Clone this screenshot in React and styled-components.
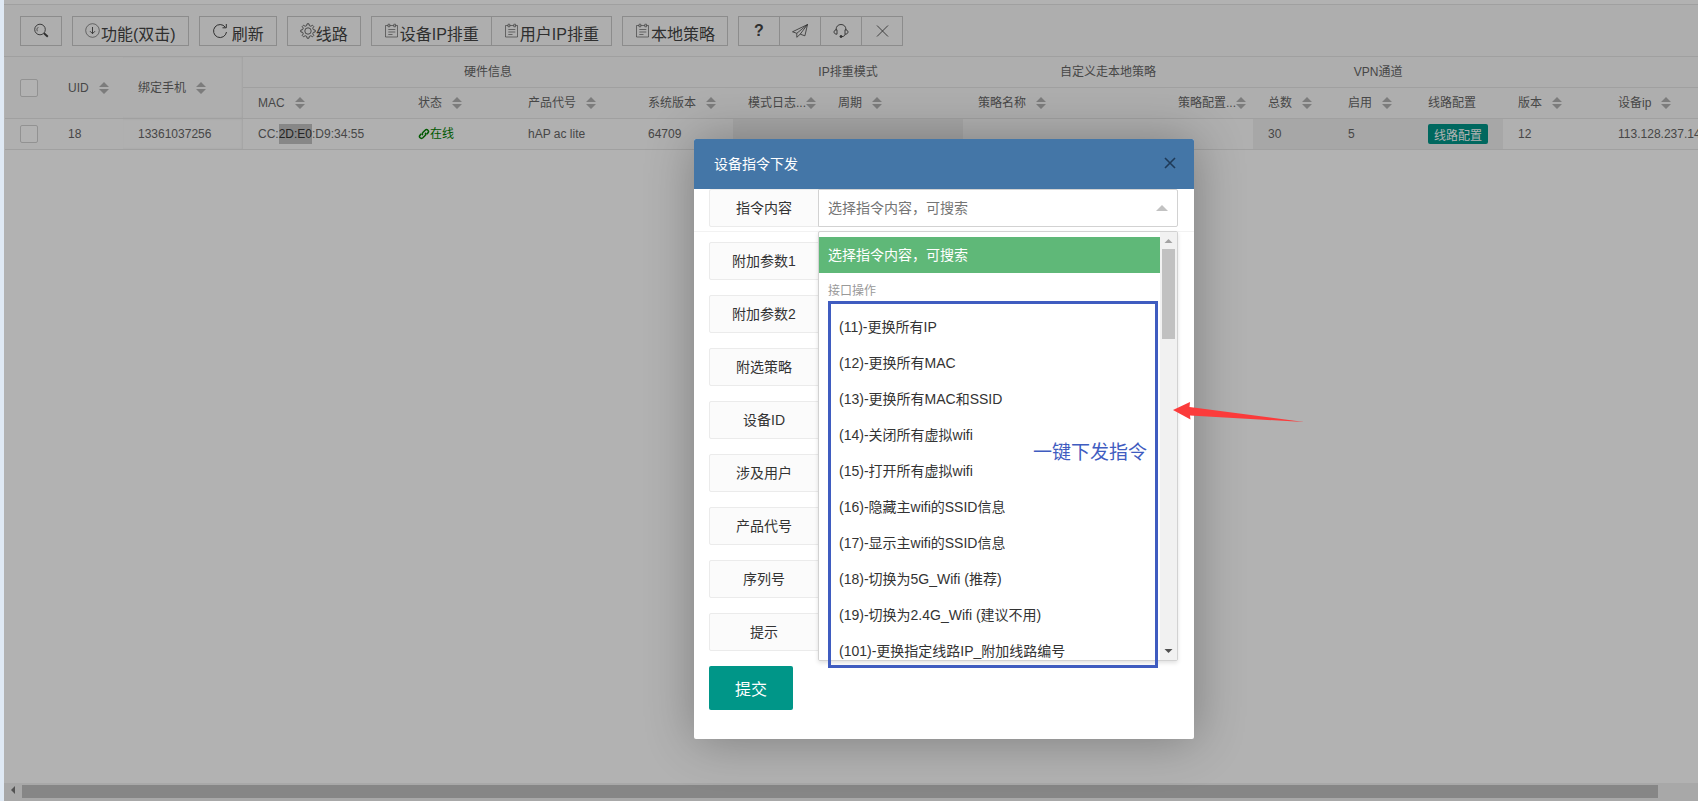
import React, { useState } from 'react';
import styled, { createGlobalStyle } from 'styled-components';

const groups = [
  { title: "硬件信息", span: 4 },
  { title: "IP排重模式", span: 2 },
  { title: "自定义走本地策略", span: 2 },
  { title: "VPN通道", span: 3 },
  { title: "", span: 2 },
];

const columns = [
  { title: "MAC", sort: true },
  { title: "状态", sort: true },
  { title: "产品代号", sort: true },
  { title: "系统版本", sort: true },
  { title: "模式日志...", sort: true, tight: true },
  { title: "周期", sort: true },
  { title: "策略名称", sort: true },
  { title: "策略配置...", sort: true, tight: true },
  { title: "总数", sort: true },
  { title: "启用", sort: true },
  { title: "线路配置" },
  { title: "版本", sort: true },
  { title: "设备ip", sort: true },
];

const widths = [48, 70, 120, 160, 110, 120, 100, 90, 140, 200, 90, 80, 80, 90, 100, 160];

const commands = [
  "(11)-更换所有IP",
  "(12)-更换所有MAC",
  "(13)-更换所有MAC和SSID",
  "(14)-关闭所有虚拟wifi",
  "(15)-打开所有虚拟wifi",
  "(16)-隐藏主wifi的SSID信息",
  "(17)-显示主wifi的SSID信息",
  "(18)-切换为5G_Wifi (推荐)",
  "(19)-切换为2.4G_Wifi (建议不用)",
  "(101)-更换指定线路IP_附加线路编号",
];

const fields = ["附加参数1", "附加参数2", "附选策略", "设备ID", "涉及用户", "产品代号", "序列号", "提示"];

///ICONS///
const Icon = ({ children, size = 16 }) => (
  <svg width={size} height={size} viewBox="0 0 16 16" fill="none" stroke="currentColor" strokeWidth="1" aria-hidden="true">
    {children}
  </svg>
);

const SearchIcon = () => (
  <Icon>
    <circle cx="7" cy="6.5" r="5.3" strokeWidth=".9" />
    <path d="M11 10.200l3.800 3.600" strokeWidth="1.900" />
    <path d="M4.300 8.300a3.200 3.200 0 0 1 1-4.200" strokeWidth=".7" />
  </Icon>
);

const DownIcon = () => (
  <Icon>
    <circle cx="7.5" cy="7.5" r="6.8" strokeWidth=".6" />
    <path d="M7.500 4v6.500M5 8.200l2.500 2.500L10 8.200" strokeWidth=".9" />
  </Icon>
);

const RefreshIcon = () => (
  <Icon>
    <path d="M13.300 4.200A6.500 6.500 0 1 0 14.500 9" />
    <path d="M14.300 1v3.800h-3.800" />
  </Icon>
);

const GearIcon = () => (
  <Icon>
    <circle cx="8" cy="8" r="3.200" strokeWidth=".8" />
    <path d="M6.7 2.6L7 .8h2l.3 1.8 1.6.7 1.5-1.1 1.4 1.4-1.1 1.5.7 1.6 1.8.3v2l-1.8.3-.7 1.6 1.1 1.5-1.4 1.4-1.5-1.1-1.6.7-.3 1.8H7l-.3-1.8-1.6-.7-1.5 1.1-1.4-1.4 1.1-1.5-.7-1.6L.8 9V7l1.8-.3.7-1.6-1.1-1.5 1.4-1.4 1.5 1.1z" strokeWidth=".8" />
  </Icon>
);

const NoteIcon = () => (
  <Icon>
    <path d="M4 2.500H1.500v11.500h12V2.500h-2M5.800 2.500h4M4 1.200h1.800v2.600H4zM9.800 1.200h1.800v2.600H9.800zM4.300 6.500h7M4.300 9h7M4.300 11.500h4.200" strokeWidth=".6" />
  </Icon>
);

const PlaneIcon = () => (
  <Icon>
    <path d="M15.500 1.500L.5 8.800l4.300 1.500L15.500 1.500l-2.600 11.300-4.700-1.600M4.800 10.300v4l3.400-3.100L15.500 1.500" strokeWidth=".8" />
  </Icon>
);

const ServiceIcon = () => (
  <Icon>
    <path d="M3 7C3 3.500 5 1.500 8 1.500s5 2 5 5.500" strokeWidth=".9" />
    <path d="M4 6.800v4.400C2.300 11.200 1 10.500 1 9s1.300-2.200 3-2.200zM12 6.800v4.400c1.700 0 3-.7 3-2.200s-1.300-2.200-3-2.200zM12 11.200c0 1.500-1.200 2.300-3 2.400" strokeWidth=".9" />
    <circle cx="8" cy="13.500" r="1" fill="currentColor" />
  </Icon>
);

const CrossIcon = ({ bold }) => (
  <Icon>
    <path d={bold ? "M3 3l10 10M13 3L3 13" : "M3 2.500l11 11M14 2.500L3 13.500"} strokeWidth={bold ? 1.6 : 0.9} />
  </Icon>
);

const LinkIcon = () => (
  <Icon size={12}>
    <g strokeWidth="2">
      <path d="M6.500 9.500c-1-1-.9-2.500 0-3.400l3-3.200c1-1 2.700-1 3.700 0s1 2.600 0 3.600l-1.700 1.800" />
      <path d="M9.500 6.500c1 1 .9 2.500 0 3.400l-3 3.200c-1 1-2.700 1-3.700 0s-1-2.600 0-3.600l1.700-1.800" />
    </g>
  </Icon>
);

const SortIcon = () => (
  <svg width="10" height="12" viewBox="0 0 10 12" fill="#b2b2b2" aria-hidden="true">
    <path d="M0 5l5-5 5 5zM0 7h10l-5 5z" />
  </svg>
);

const HeadCell = ({ col }) => (
  <HeadContent $tight={col.tight}>
    {col.title}
    {col.sort && <SortIcon />}
  </HeadContent>
);

const App = () => {
  ////STATES////
  const [checked, setChecked] = useState(false);
  const [command, setCommand] = useState("");

  return (
    <Page>
      <GlobalStyle />
      <Toolbar>
        <ToolButton aria-label="搜索"><SearchIcon /></ToolButton>
        <ToolButton><DownIcon /><span>功能(双击)</span></ToolButton>
        <ToolButton $gap="4px"><RefreshIcon /><span>刷新</span></ToolButton>
        <ToolButton><GearIcon /><span>线路</span></ToolButton>
        <ButtonGroup>
          <ToolButton><NoteIcon /><span>设备IP排重</span></ToolButton>
          <ToolButton><NoteIcon /><span>用户IP排重</span></ToolButton>
        </ButtonGroup>
        <ToolButton><NoteIcon /><span>本地策略</span></ToolButton>
        <ButtonGroup>
          <ToolButton><Question>?</Question></ToolButton>
          <ToolButton aria-label="发送"><PlaneIcon /></ToolButton>
          <ToolButton aria-label="客服"><ServiceIcon /></ToolButton>
          <ToolButton aria-label="关闭"><CrossIcon /></ToolButton>
        </ButtonGroup>
      </Toolbar>

      <TableBox>
        <Table>
          <colgroup>
            {widths.map((w, index) => <Col key={index} $w={w} />)}
          </colgroup>
          <thead>
            <tr>
              <Th rowSpan={2}><Checkbox aria-label="全选" checked={checked} onChange={() => setChecked(!checked)} /></Th>
              <Th rowSpan={2}><HeadCell col={{ title: "UID", sort: true }} /></Th>
              <Th rowSpan={2} $edge><HeadCell col={{ title: "绑定手机", sort: true }} /></Th>
              {groups.map((group, index) => (
                <Th key={index} colSpan={group.span} $center>{group.title}</Th>
              ))}
            </tr>
            <tr>
              {columns.map((col) => <Th key={col.title}><HeadCell col={col} /></Th>)}
            </tr>
          </thead>
          <tbody>
            <tr>
              <Td><Checkbox aria-label="选择 18" checked={checked} onChange={() => setChecked(!checked)} /></Td>
              <Td>18</Td>
              <Td $edge>13361037256</Td>
              <Td>CC:<Marked>2D:E0</Marked>:D9:34:55</Td>
              <Td><Online><LinkIcon />在线</Online></Td>
              <Td>hAP ac lite</Td>
              <Td>64709</Td>
              <Td $shade />
              <Td $shade />
              <Td />
              <Td />
              <Td $shade>30</Td>
              <Td $shade>5</Td>
              <Td $shade><RowButton>线路配置</RowButton></Td>
              <Td>12</Td>
              <Td>113.128.237.14</Td>
            </tr>
          </tbody>
        </Table>
      </TableBox>

      <BottomScroll>
        <svg width="18" height="18" viewBox="0 0 18 18" fill="#777" aria-hidden="true"><path d="M11 4v8L7 8z" /></svg>
        <BottomThumb />
      </BottomScroll>

      <Shade />

      <Modal role="dialog" aria-labelledby="dialog-title">
        <ModalHeader>
          <ModalTitle id="dialog-title">设备指令下发</ModalTitle>
          <CloseButton aria-label="关闭"><CrossIcon bold /></CloseButton>
        </ModalHeader>
        <Form onSubmit={(e) => e.preventDefault()}>
          <CommandItem>
            <Label htmlFor="command">指令内容</Label>
            <SelectBox>
              <Input id="command" placeholder="选择指令内容，可搜索" value={command} onChange={(e) => setCommand(e.target.value)} />
              <Caret width="12" height="6" viewBox="0 0 12 6" aria-hidden="true"><path d="M0 6l6-6 6 6z" fill="#c2c2c2" /></Caret>
              <Dropdown>
                <Options role="listbox" aria-label="指令内容">
                  <Option role="option" aria-selected="true" $active>选择指令内容，可搜索</Option>
                  <OptionGroup role="presentation">接口操作</OptionGroup>
                  {commands.map((item) => (
                    <Option key={item} role="option" aria-selected="false" $child onClick={() => setCommand(item)}>{item}</Option>
                  ))}
                </Options>
                <ScrollTrack>
                  <svg width="17" height="17" viewBox="0 0 17 17" fill="#a3a3a3" aria-hidden="true"><path d="M4.500 11h8l-4-4z" /></svg>
                  <ScrollThumb />
                  <svg width="17" height="17" viewBox="0 0 17 17" fill="#505050" aria-hidden="true"><path d="M4.500 6h8l-4 4z" /></svg>
                </ScrollTrack>
              </Dropdown>
              <Frame><Note>一键下发指令</Note></Frame>
              <Arrow width="132" height="22" viewBox="0 0 132 22" aria-hidden="true">
                <path d="M0 9L17 1l-.5 5L131 21 17 14.500l.5 4z" fill="#fb3b3b" />
              </Arrow>
            </SelectBox>
          </CommandItem>
          {fields.map((field, index) => (
            <FormItem key={field}>
              <Label htmlFor={`field-${index}`}>{field}</Label>
              <Input id={`field-${index}`} />
            </FormItem>
          ))}
          <Submit type="submit">提交</Submit>
        </Form>
      </Modal>
    </Page>
  );
};

///STYLED COMPONENTS///
const GlobalStyle = createGlobalStyle`
  * {
    box-sizing: border-box;
  }

  body {
    margin: 0;
    overflow: hidden;
  }

  body, button, input {
    font-family: "Liberation Sans", "Noto Sans CJK SC", sans-serif;
  }
`;

const Page = styled.div`
  position: relative;
  display: flex;
  flex-direction: column;
  min-height: 100vh;
  padding-top: 4px;
  border-left: 4px solid #dfe9f4;
  background: #fff;
  color: #666;
  overflow: hidden;
`;

const Toolbar = styled.div`
  display: flex;
  gap: 10px;
  padding: 11px 16px 10px;
  border-top: 1px solid #e6e6e6;
  border-bottom: 1px solid #e6e6e6;
  background: #fafafa;
`;

const ToolButton = styled.button`
  display: flex;
  align-items: center;
  gap: ${({ $gap }) => $gap || 0};
  height: 30px;
  padding: 0 12px;
  border: 1px solid #c9c9c9;
  background: transparent;
  color: #444;
  font-size: 16px;
  line-height: 24px;
  white-space: nowrap;
  cursor: pointer;

  svg {
    flex-shrink: 0;
  }

  span {
    padding-top: 7px;
  }
`;

const ButtonGroup = styled.div`
  display: flex;

  ${ToolButton} + ${ToolButton} {
    margin-left: -1px;
  }
`;

const Question = styled.b`
  width: 16px;
  text-align: center;
`;

const TableBox = styled.div`
  flex: 1;
  overflow: hidden;
`;

const Table = styled.table`
  table-layout: fixed;
  width: 1758px;
  margin-left: 1px;
  border-spacing: 0;
  font-size: 12px;
  line-height: 20px;
`;

const Col = styled.col`
  width: ${({ $w }) => $w}px;
`;

const Th = styled.th`
  height: 31px;
  padding: 0 15px;
  border-bottom: 1px solid #e6e6e6;
  background: #fafafa;
  font-weight: normal;
  text-align: ${({ $center }) => ($center ? "center" : "left")};
  white-space: nowrap;
  box-shadow: ${({ $edge }) => ($edge ? "inset -1px 0 2px rgba(0, 0, 0, 0.08)" : "none")};
`;

const Td = styled.td`
  height: 31px;
  padding: 0 15px;
  border-bottom: 1px solid #e6e6e6;
  background: ${({ $shade }) => ($shade ? "#efefef" : "#fcfcfc")};
  white-space: nowrap;
  box-shadow: ${({ $edge }) => ($edge ? "inset -1px 0 2px rgba(0, 0, 0, 0.08)" : "none")};
`;

const HeadContent = styled.div`
  display: flex;
  align-items: center;
  gap: ${({ $tight }) => ($tight ? 0 : "10px")};

  svg {
    flex-shrink: 0;
  }
`;

const Checkbox = styled.input.attrs({ type: "checkbox" })`
  appearance: none;
  display: block;
  width: 18px;
  height: 18px;
  margin: 0;
  border: 1px solid #d2d2d2;
  border-radius: 2px;
  background: #fff;

  &:checked {
    background: #5fb878;
  }
`;

const Marked = styled.span`
  display: inline-block;
  background: #c2c2c2;
  color: #333;
`;

const Online = styled.div`
  display: flex;
  align-items: center;
  color: green;
`;

const RowButton = styled.button`
  display: block;
  height: 20px;
  padding: 4px 6px 0;
  border: none;
  border-radius: 2px;
  background: #009688;
  color: #fff;
  font-size: 12px;
  line-height: 16px;
`;

const BottomScroll = styled.div`
  display: flex;
  align-items: center;
  height: 18px;
  padding: 0 40px 2px 0;
  background: #f1f1f1;
`;

const BottomThumb = styled.div`
  flex: 1;
  height: 13px;
  background: #c1c1c1;
`;

const Shade = styled.div`
  position: absolute;
  inset: 0;
  background: rgba(0, 0, 0, 0.3);
`;

const Modal = styled.div`
  position: absolute;
  top: 139px;
  left: 690px;
  width: 500px;
  min-height: 600px;
  border-radius: 2px;
  background: #fff;
  box-shadow: 1px 1px 50px rgba(0, 0, 0, 0.3);
`;

const ModalHeader = styled.div`
  display: flex;
  align-items: center;
  justify-content: space-between;
  height: 50px;
  padding: 0 16px 2px 20px;
  border-radius: 2px 2px 0 0;
  background: #4476a7;
`;

const ModalTitle = styled.h2`
  margin: 0;
  color: #fff;
  font-size: 14px;
  font-weight: normal;
`;

const CloseButton = styled.button`
  display: flex;
  padding: 0;
  border: none;
  background: none;
  color: #1f3a58;
  cursor: pointer;
`;

const Form = styled.form`
  padding: 0 16px 29px 15px;
`;

const FormItem = styled.div`
  display: flex;
  margin-bottom: 15px;
`;

const CommandItem = styled(FormItem)`
  margin: 0 -16px 10px -15px;
  padding: 0 16px 4px 15px;
  border-bottom: 1px solid #f2f2f2;
`;

const Label = styled.label`
  flex-shrink: 0;
  width: 110px;
  height: 38px;
  border: 1px solid #ebebeb;
  border-radius: 2px 0 0 2px;
  background: #fbfbfb;
  color: #333;
  font-size: 14px;
  line-height: 36px;
  text-align: center;
`;

const Input = styled.input`
  flex: 1;
  width: 100%;
  min-width: 0;
  height: 38px;
  margin-left: -1px;
  padding: 0 9px;
  border: 1px solid #e6e6e6;
  border-radius: 0 2px 2px 0;
  font-size: 14px;
  color: #333;

  &::placeholder {
    color: #757575;
  }
`;

const SelectBox = styled.div`
  position: relative;
  flex: 1;
  display: flex;
  margin-left: -1px;

  ${Input} {
    margin-left: 0;
    border-color: #d2d2d2;
  }
`;

const Caret = styled.svg`
  position: absolute;
  top: 16px;
  right: 10px;
`;

const Dropdown = styled.div`
  position: absolute;
  top: 42px;
  left: 0;
  right: 0;
  display: flex;
  height: 430px;
  border: 1px solid #d2d2d2;
  border-radius: 2px;
  background: #fff;
  box-shadow: 0 2px 4px rgba(0, 0, 0, 0.12);
  overflow: hidden;
`;

const Options = styled.ul`
  flex: 1;
  margin: 0;
  padding: 5px 0;
  list-style: none;
`;

const Option = styled.li`
  height: 36px;
  padding: 0 9px 0 ${({ $child }) => ($child ? "20px" : "9px")};
  background: ${({ $active }) => ($active ? "#5fb878" : "#fff")};
  color: ${({ $active }) => ($active ? "#fff" : "#333")};
  font-size: 14px;
  line-height: 36px;
  white-space: nowrap;
  cursor: pointer;
`;

const OptionGroup = styled.li`
  height: 36px;
  padding: 0 9px;
  color: #999;
  font-size: 12px;
  line-height: 36px;
`;

const ScrollTrack = styled.div`
  display: flex;
  flex-direction: column;
  align-items: center;
  width: 17px;
  background: #f1f1f1;
`;

const ScrollThumb = styled.div`
  width: 13px;
  height: 90px;
  margin-bottom: auto;
  background: #c1c1c1;
`;

const Frame = styled.div`
  position: absolute;
  top: 112px;
  left: 10px;
  display: flex;
  align-items: center;
  justify-content: flex-end;
  width: 330px;
  height: 367px;
  padding: 0 8px 64px;
  border: 3px solid #3f5cc0;
  pointer-events: none;
`;

const Note = styled.span`
  color: #3f5cc0;
  font-size: 19px;
  line-height: 28px;
`;

const Arrow = styled.svg`
  position: absolute;
  top: 212px;
  left: 355px;
`;

const Submit = styled.button`
  display: block;
  width: 84px;
  height: 44px;
  border: none;
  border-radius: 2px;
  background: #009688;
  color: #fff;
  font-size: 16px;
  cursor: pointer;
`;

export default App;
